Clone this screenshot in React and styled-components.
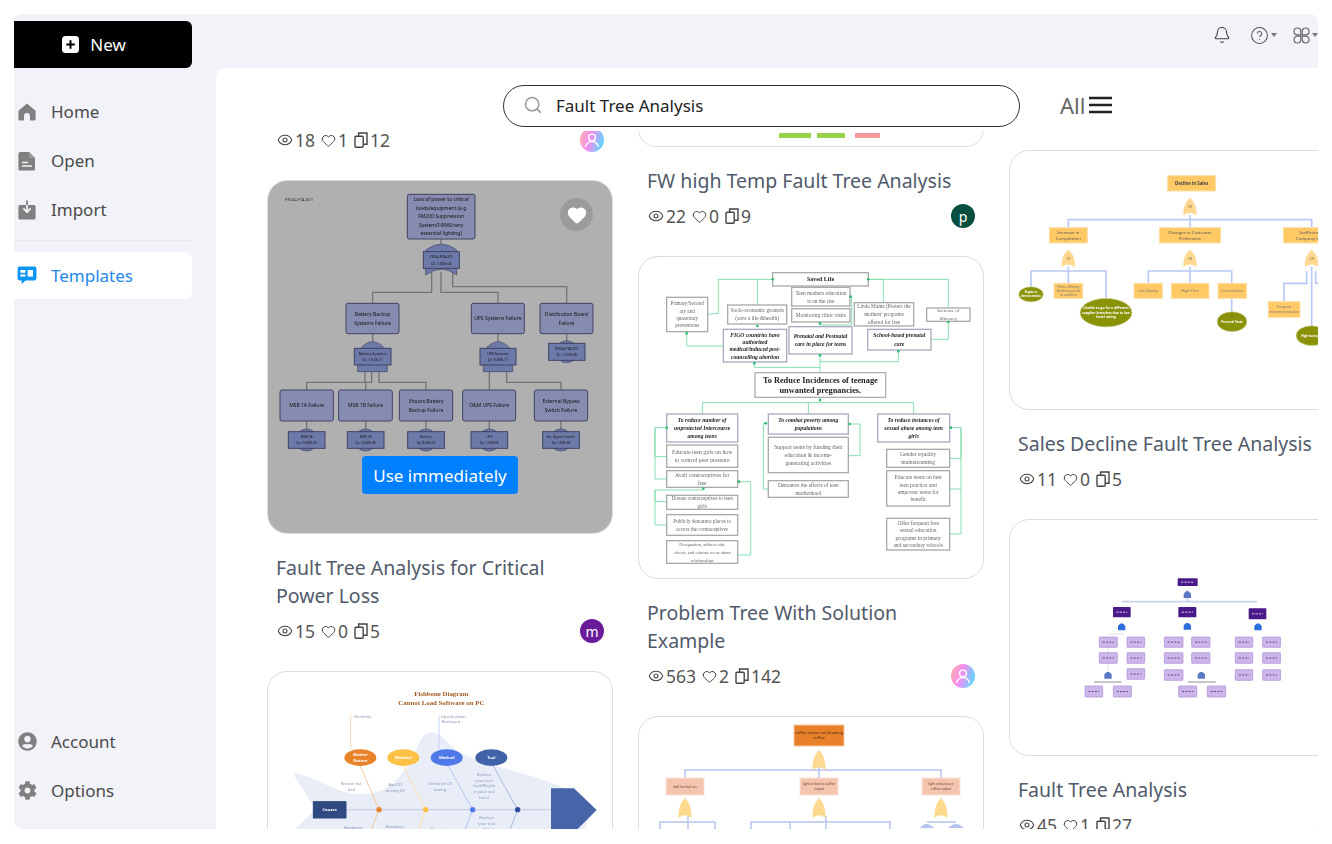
import { createGlobalStyle, styled } from "styled-components"
import { Bell, CircleHelp, Eye, Heart, Search } from "lucide-react"
import { FaCog, FaUserCircle } from "react-icons/fa"

const GlobalStyle = createGlobalStyle`
  html, body {
    margin: 0;
    background: #fff;
    font-family: "Noto Sans", "Open Sans", sans-serif;
  }
  * { box-sizing: border-box; }
`

// diagram helpers, coordinates are the ones of the thumbnail viewBox
const Rect = ({ b, fill = "#fff", stroke = "#999", sw = 3, r = 0, lines = [], size = 15, color = "#333", weight, italic, family, lh }) => {
  const [x1, y1, x2, y2] = b
  const step = lh || size * 1.6
  const cy = (y1 + y2) / 2 - ((lines.length - 1) * step) / 2
  return (
    <g>
      <rect x={x1} y={y1} width={x2 - x1} height={y2 - y1} fill={fill} stroke={stroke} strokeWidth={sw} rx={r} />
      {lines.map((t, i) => (
        <text
          key={i}
          x={(x1 + x2) / 2}
          y={cy + i * step + size * 0.35}
          textAnchor="middle"
          fontSize={size}
          fill={color}
          fontWeight={weight}
          fontStyle={italic ? "italic" : undefined}
          fontFamily={family}
        >
          {t}
        </text>
      ))}
    </g>
  )
}

const Lines = ({ pts, stroke, sw = 3 }) => (
  <g fill="none" stroke={stroke} strokeWidth={sw}>
    {pts.map((p) => <polyline key={p} points={p} />)}
  </g>
)

const OrGate = ({ x, y, w = 40, h = 52, fill = "#ffd88f", label = true }) => (
  <g>
    <path
      d={`M${x} ${y - h / 2} C${x + w * 0.42} ${y - h * 0.22} ${x + w / 2} ${y + h * 0.1} ${x + w / 2} ${y + h / 2} Q${x} ${y + h * 0.22} ${x - w / 2} ${y + h / 2} C${x - w / 2} ${y + h * 0.1} ${x - w * 0.42} ${y - h * 0.22} ${x} ${y - h / 2} Z`}
      fill={fill}
    />
    {label && <text x={x} y={y + 4} textAnchor="middle" fontSize="9" fill="#8a7a50">OR</text>}
  </g>
)

const boxBlue = "#c4caff"
const boxEdge = "#5c6090"

const PowerLossDiagram = () => {
  const mid = [
    [[258, 385, 417, 476], ["Battery Backup", "Systems Failure"]],
    [[634, 385, 793, 476], ["UPS Systems Failure"]],
    [[840, 385, 999, 476], ["Distribution Board", "Failure"]],
    [[60, 645, 220, 738], ["MSB 1A Failure"]],
    [[236, 645, 397, 738], ["MSB 1B Failure"]],
    [[418, 645, 578, 738], ["3hours Battery", "Backup Failure"]],
    [[608, 645, 767, 738], ["O&M UPS Failure"]],
    [[823, 645, 983, 738], ["External Bypass", "Switch Failure"]],
  ]
  const events = [
    [140, "MSB 1A", "Q= 3.000E-06"],
    [317, "MSB 1B", "Q= 3.000E-06"],
    [498, "Battery", "Q= 8.00E-06"],
    [688, "UPS", "Q= 1.00E-06"],
    [903, "Ext. Bypass Switch", "Q= 1.00E-06"],
  ]
  return (
    <DiagramSvg viewBox="21 15 1038 1059">
      <text x="75" y="77" fontSize="13" fill="#444">PKG4-FTA-001</text>
      <Lines
        stroke="#a8a8a8"
        sw={4}
        pts={[
          "543,192 543,230",
          "515,290 515,352 338,352 338,385",
          "543,290 543,352 714,352 714,385",
          "578,290 578,335 920,335 920,385",
          "338,476 338,500",
          "714,476 714,500",
          "920,476 920,500",
          "315,590 315,622 140,622 140,645",
          "335,590 335,622 317,622 317,645",
          "357,590 357,622 498,622 498,645",
          "688,590 688,645",
          "740,590 740,622 903,622 903,645",
          "140,738 140,770",
          "317,738 317,770",
          "498,738 498,770",
          "688,738 688,770",
          "903,738 903,770",
        ]}
      />
      <Rect b={[442, 58, 645, 192]} fill={boxBlue} stroke={boxEdge} r={6} size={15} lh={25.5} color="#222" lines={["Loss of power to critical", "loads/equipment (e.g", "FM200 Suppression", "System/I-BMS/very", "essential lighting)"]} />
      <path d="M497 300 V225 Q545 190 590 225 V300 Q545 265 497 300 Z" fill="#9fb0f5" stroke={boxEdge} strokeWidth="2" />
      <Rect b={[490, 230, 598, 280]} fill="#9fb0f5" stroke={boxEdge} size={11} lh={20} color="#222" lines={["PKG4-FTA-001", "Q= 1.05E-06"]} />

      {mid.map(([b, lines]) => (
        <Rect key={lines[0]} b={b} fill={boxBlue} stroke={boxEdge} r={6} size={15} lh={27} color="#222" lines={lines} />
      ))}

      <path d="M293 590 V530 Q338 470 382 530 V590 Z" fill="#9fb0f5" stroke={boxEdge} strokeWidth="2" />
      <Rect b={[283, 520, 393, 570]} fill="#9fb0f5" stroke={boxEdge} size={11} lh={20} color="#222" lines={["Battery Systems", "Q= 7.62E-11"]} />
      <path d="M670 590 V530 Q714 470 758 530 V590 Z" fill="#9fb0f5" stroke={boxEdge} strokeWidth="2" />
      <Rect b={[660, 520, 768, 570]} fill="#9fb0f5" stroke={boxEdge} size={11} lh={20} color="#222" lines={["UPS Systems", "Q= 3.90E-11"]} />
      <circle cx="920" cy="530" r="33" fill="#9fb0f5" stroke={boxEdge} strokeWidth="2" />
      <Rect b={[866, 505, 975, 556]} fill="#9fb0f5" stroke={boxEdge} size={11} lh={20} color="#222" lines={["PKG4-FTA-001", "Q= 1.05E-06"]} />

      {events.map(([x, name, q]) => (
        <g key={name}>
          <circle cx={x} cy="795" r="33" fill="#9fb0f5" stroke={boxEdge} strokeWidth="2" />
          <Rect b={[x - 55, 770, x + 55, 820]} fill="#9fb0f5" stroke={boxEdge} size={10} lh={18} color="#222" lines={[name, q]} />
        </g>
      ))}
    </DiagramSvg>
  )
}

const serif = "Liberation Serif, serif"

const ProblemTreeDiagram = () => {
  const plain = [
    [[95, 142, 218, 245], ["Primary/Second", "ary and", "quaternary", "preventions"], 15.5],
    [[278, 165, 455, 222], ["Socio-economic grounds", "(save a life &health)"], 16],
    [[470, 112, 645, 168], ["Teen mothers education", "is on the rise"], 16],
    [[470, 176, 645, 216], ["Monitoring clinic visits"], 16],
    [[658, 158, 836, 228], ["Linda Mama (Protect the", "mothers' programs", "offered for free"], 16],
    [[875, 174, 1005, 214], ["Increase of", "illiteracy"], 15],
    [[95, 585, 308, 652], ["Educate teen girls on how", "to control peer pressure"], 17.5],
    [[95, 662, 308, 712], ["Avail contraceptives for", "free"], 17],
    [[95, 736, 308, 778], ["Donate contraceptives to teen", "girls"], 15.5],
    [[95, 794, 308, 856], ["Publicly denounce places to", "access the contraceptives"], 15.5],
    [[95, 872, 308, 940], ["Designation, address side", "effects, and educate teens about", "relationships"], 13.5],
    [[400, 562, 640, 668], ["Support teens by funding their", "education & income-", "generating activities"], 17],
    [[400, 692, 640, 742], ["Denounce the effects of teen", "motherhood"], 16],
    [[755, 598, 944, 652], ["Gender equality", "mainstreaming"], 17],
    [[755, 662, 944, 768], ["Educate teens on best", "teen practice and", "empower teens for", "benefit"], 16.5],
    [[755, 805, 944, 900], ["Offer frequent free", "sexual education", "programs in primary", "and secondary schools"], 16.5],
  ]
  const goals = [
    [[265, 238, 455, 336], ["FIGO countries have", "authorized", "medical/induced post-", "counselling abortion"]],
    [[462, 230, 651, 312], ["Prenatal and Postnatal", "care in place for teens"]],
    [[698, 238, 888, 300], ["School-based prenatal", "care"]],
    [[95, 492, 308, 576], ["To reduce number of", "unprotected Intercourse", "among teens"]],
    [[400, 492, 640, 552], ["To combat poverty among", "populations"]],
    [[728, 492, 944, 576], ["To reduce instances of", "sexual abuse among teen", "girls"]],
  ]
  const arrows = [
    [413, 88], [700, 88], [155, 250], [367, 228], [555, 220], [555, 316], [940, 216], [790, 304], [358, 340],
    [555, 450], [95, 533], [205, 716], [312, 695], [392, 520], [644, 522], [948, 533], [647, 140],
  ]
  return (
    <DiagramSvg viewBox="9 18 1038 969">
      <Lines
        stroke="#86dfb0"
        sw={3}
        pts={[
          "218,193 250,190 250,88 413,88",
          "367,165 367,88",
          "745,158 745,88 700,88",
          "940,174 940,88 700,88",
          "265,288 155,288 155,245",
          "888,268 940,268 940,214",
          "555,368 555,312",
          "555,352 358,352 358,336",
          "555,335 790,335 790,300",
          "645,140 650,140 650,225 555,225 555,216",
          "555,442 555,458 202,458 202,492",
          "520,458 520,492",
          "555,458 836,458 836,492",
          "95,620 60,620 60,533 95,533",
          "95,687 60,687 60,533",
          "308,915 347,915 347,695 308,695",
          "95,755 60,755 60,720 205,720 205,712",
          "95,825 60,825 60,720",
          "400,717 385,717 385,520 400,520",
          "640,617 675,617 675,522 640,522",
          "944,625 978,625 978,533 944,533",
          "944,717 978,717",
          "944,852 978,852 978,533",
        ]}
      />
      <Rect b={[413, 68, 700, 108]} stroke="#aaa" sw={4} size={18} weight="700" color="#222" family={serif} lines={["Saved Life"]} />
      <Rect b={[360, 368, 752, 442]} stroke="#b0b0b0" sw={4} size={25} lh={30} weight="700" color="#222" family={serif} lines={["To Reduce Incidences of teenage", "unwanted pregnancies."]} />
      {plain.map(([b, lines, size]) => (
        <Rect key={lines[0]} b={b} stroke="#aaa" sw={4} size={size} lh={lines.length > 3 ? 22 : 24} color="#666" family={serif} lines={lines} />
      ))}
      {goals.map(([b, lines]) => (
        <Rect key={lines[0]} b={b} stroke="#a8acbc" sw={4} size={17} lh={lines.length > 3 ? 22 : 25} color="#222" weight="700" italic family={serif} lines={lines} />
      ))}
      {arrows.map(([x, y]) => <circle key={`${x}-${y}`} cx={x} cy={y} r="4" fill="#2ebd6e" />)}
    </DiagramSvg>
  )
}

const SalesTreeDiagram = () => {
  const boxes = [
    [[162, 415, 248, 460], ["Firms offering", "identical goods", "at random"], 10, 13],
    [[402, 415, 487, 460], ["Low Quality"], 11, 14],
    [[514, 415, 627, 460], ["High Price"], 11, 14],
    [[654, 415, 740, 460], ["Convenience"], 11, 14],
    [[805, 470, 900, 517], ["Frequent", "miscommunication"], 10, 15],
  ]
  const olive = [
    [93, 448, 37, 23, ["Region or", "demonstration"], 8],
    [318, 503, 78, 43, ["Unable to go for a different", "supplier branches due to low", "hotel rating"], 10],
    [696, 530, 45, 30, ["Personal Taste"], 9],
    [935, 572, 47, 30, ["High turnover"], 9],
  ]
  return (
    <DiagramSvg viewBox="27 15 1038 780">
      <Lines
        stroke="#b9c9f5"
        sw={5}
        pts={[
          "205,248 205,224 935,224 935,248",
          "570,210 570,248",
          "93,425 93,378 318,378 318,460",
          "205,365 205,415",
          "445,415 445,378 695,378 695,500",
          "570,365 570,415",
          "852,470 852,415 920,415 920,378",
          "935,365 935,545",
          "947,378 947,415 970,415",
        ]}
      />
      <Rect b={[503, 92, 647, 138]} fill="#ffc966" stroke="#ffe0a8" size={13} weight="700" color="#444" lines={["Decline in Sales"]} />
      <Rect b={[148, 248, 262, 294]} fill="#ffc966" stroke="#ffe0a8" size={13} lh={18} color="#555" lines={["Increase in", "Competition"]} />
      <Rect b={[478, 248, 662, 294]} fill="#ffc966" stroke="#ffe0a8" size={13} lh={18} color="#555" lines={["Changes in Customer", "Preference"]} />
      <Rect b={[850, 248, 1040, 294]} fill="#ffc966" stroke="#ffe0a8" size={13} lh={18} color="#555" lines={["Inefficiencies in", "Company's Quality"]} />
      {[[570, 185], [205, 340], [570, 340], [935, 340]].map(([x, y]) => (
        <OrGate key={`${x}-${y}`} x={x} y={y} />
      ))}
      {boxes.map(([b, lines, size, lh]) => (
        <Rect key={lines[0]} b={b} fill="#ffc966" stroke="#ffe0a8" size={size} lh={lh} color="#777" lines={lines} />
      ))}
      {olive.map(([cx, cy, rx, ry, lines, size]) => (
        <g key={lines[0]}>
          <ellipse cx={cx} cy={cy} rx={rx} ry={ry} fill="#8a9208" stroke="#dfe2b8" strokeWidth="2" />
          {lines.map((t, i) => (
            <text key={t} x={cx} y={cy + 3 + (i - (lines.length - 1) / 2) * (size + 4)} textAnchor="middle" fontSize={size} fontWeight="700" fill="#fff">{t}</text>
          ))}
        </g>
      ))}
    </DiagramSvg>
  )
}

const PurpleTreeDiagram = () => {
  const dark = [[533, 205, 593, 228], [339, 291, 392, 322], [535, 291, 589, 322], [746, 295, 799, 328]]
  const light = [
    [298, 381, 352, 412], [381, 381, 434, 412], [298, 428, 352, 460], [381, 428, 434, 460], [381, 476, 434, 508],
    [493, 381, 549, 412], [575, 381, 630, 412], [493, 428, 549, 460], [575, 428, 630, 460], [493, 479, 549, 511],
    [706, 381, 758, 412], [788, 381, 842, 412], [706, 428, 758, 460], [788, 428, 842, 460], [706, 479, 758, 511], [788, 479, 842, 511],
    [255, 528, 308, 561], [340, 528, 394, 561], [536, 528, 590, 561], [622, 528, 677, 561],
  ]
  return (
    <DiagramSvg viewBox="27 27 1038 708">
      <Lines stroke="#c9d2ec" sw={5} pts={["365,275 772,275", "562,240 562,275"]} />
      <Lines stroke="#e2e2e2" sw={3} pts={["324,381 324,480", "324,372 372,372"]} />
      <Lines stroke="#aaa" sw={4} pts={["282,516 365,516", "563,516 647,516"]} />
      {dark.map(([x1, y1, x2, y2]) => (
        <g key={`${x1}-${y1}`}>
          <rect x={x1} y={y1} width={x2 - x1} height={y2 - y1} fill="#4b1a8a" rx="2" />
          <line x1={x1 + 10} x2={x2 - 10} y1={(y1 + y2) / 2} y2={(y1 + y2) / 2} stroke="#d8c8f0" strokeWidth="3" strokeDasharray="7 3" />
        </g>
      ))}
      {light.map(([x1, y1, x2, y2]) => (
        <g key={`${x1}-${y1}`}>
          <rect x={x1} y={y1} width={x2 - x1} height={y2 - y1} fill="#cdb6ea" stroke="#a98ad6" strokeWidth="2" rx="2" />
          <line x1={x1 + 10} x2={x2 - 10} y1={(y1 + y2) / 2} y2={(y1 + y2) / 2} stroke="#5a4a78" strokeWidth="3" strokeDasharray="6 4" />
        </g>
      ))}
      {[[562, 253, "#5b78c4"], [324, 495, "#5b78c4"], [604, 495, "#5b78c4"], [365, 350, "#2f6fdc"], [562, 348, "#2f6fdc"], [774, 350, "#2f6fdc"]].map(([x, y, c]) => (
        <path key={`${x}-${y}`} d={`M${x - 11} ${y + 11} V${y - 2} Q${x} ${y - 18} ${x + 11} ${y - 2} V${y + 11} Z`} fill={c} />
      ))}
    </DiagramSvg>
  )
}

const FishboneDiagram = () => {
  const small = [
    [308, 171, "Humidity"], [580, 171, "Upside-down"], [573, 187, "Backward"],
    [274, 372, "Broken hot"], [274, 390, "bed"], [406, 374, "Bad CD"], [406, 392, "driving CD"],
    [540, 372, "Defeated CD"], [540, 390, "tuning"],
    [672, 344, "Replace"], [672, 363, "your tool"], [672, 379, "load/Maybe"], [672, 396, "in your tool"], [672, 414, "here!"],
    [280, 505, "Hardware"], [404, 501, "Hardware"], [535, 511, "Running"],
    [680, 474, "Replace"], [680, 492, "your tool"], [680, 510, "load/Maybe"],
  ]
  const ovals = [
    [301, "#e8832a", ["Mother", "Nature"]],
    [430, "#ffc247", ["Material"]],
    [560, "#4f78e8", ["Method"]],
    [694, "#3f62a8", ["Tool"]],
  ]
  const dots = [[357, "#e8832a"], [497, "#ffc247"], [638, "#4f78e8"], [773, "#2f4a9a"]]
  return (
    <DiagramSvg viewBox="21 30 1038 900">
      <path d="M98 335 C170 345 230 400 300 400 C400 400 440 330 480 240 C500 205 530 205 560 240 C610 300 700 310 780 335 C840 350 880 370 930 385 L1000 445 L930 600 L300 620 L100 510 L165 445 Z" fill="#e9edf7" />
      <text x="544" y="104" textAnchor="middle" fontSize="20.5" fontWeight="700" fontFamily={serif} fill="#a05a20">Fishbone Diagram</text>
      <text x="544" y="131" textAnchor="middle" fontSize="20.5" fontWeight="700" fontFamily={serif} fill="#a05a20">Cannot Load Software on PC</text>
      <Lines stroke="#c4cbe0" sw={3} pts={["258,446 873,446"]} />
      <g fill="none" strokeWidth="3">
        <polyline points="272,165 272,265" stroke="#f8d8bc" />
        <polyline points="537,165 537,265" stroke="#c4d2f6" />
        <polyline points="301,315 357,446 325,530" stroke="#f6c7a0" />
        <polyline points="430,315 497,446 465,530" stroke="#ffe2a8" />
        <polyline points="565,315 638,446 606,530" stroke="#b2c5f4" />
        <polyline points="700,315 773,446 741,530" stroke="#a8b8dc" />
      </g>
      {small.map(([x, y, t]) => (
        <text key={`${t}-${y}`} x={x} y={y} textAnchor="middle" fontSize="12" fill="#8a97b5">{t}</text>
      ))}
      <path d="M873 382 H942 L1010 447 L942 515 L900 560 H873 Z" fill="#4565a8" />
      <Rect b={[160, 422, 258, 471]} fill="#2f4a80" stroke="#2f4a80" size={12.5} weight="700" color="#fff" lines={["Causes"]} />
      {ovals.map(([x, c, lines]) => (
        <g key={x}>
          <ellipse cx={x} cy="290" rx="48" ry="25" fill={c} />
          {lines.map((t, i) => (
            <text key={t} x={x} y={294 + (i - (lines.length - 1) / 2) * 16} textAnchor="middle" fontSize="12" fontWeight="700" fill="#fff">{t}</text>
          ))}
        </g>
      ))}
      {dots.map(([x, c]) => <circle key={x} cx={x} cy="446" r="8" fill={c} />)}
    </DiagramSvg>
  )
}

const CoffeeTreeDiagram = () => (
  <DiagramSvg viewBox="0 0 346 300">
    <Lines
      stroke="#b5c4ef"
      sw={1.5}
      pts={[
        "47,62 47,54 303,54 303,62",
        "181,50 181,62",
        "22,125 22,106 77,106 77,125",
        "50,100 50,125",
        "113,125 113,106 252,106 252,125",
        "152,106 152,125",
        "188,100 188,125",
      ]}
    />
    <Rect b={[156, 9, 206, 30]} fill="#e8802a" stroke="#f5c9a2" sw={1} size={4} lh={5} color="#4a2a10" lines={["coffee maker not brewing", "coffee"]} />
    <Rect b={[28, 62, 66, 79]} fill="#f4c4ae" stroke="#fbe3d8" sw={1} size={3.2} lh={5} color="#6a4030" lines={["well hot but cos"]} />
    <Rect b={[162, 62, 200, 79]} fill="#f4c4ae" stroke="#fbe3d8" sw={1} size={3.2} lh={5} color="#6a4030" lines={["light on but no coffee", "output"]} />
    <Rect b={[284, 62, 322, 79]} fill="#f4c4ae" stroke="#fbe3d8" sw={1} size={3.2} lh={5} color="#6a4030" lines={["light on but poor", "coffee output"]} />
    <OrGate x={181} y={44} w={13} h={20} label={false} />
    <OrGate x={47} y={92} w={13} h={20} label={false} />
    <OrGate x={181} y={92} w={13} h={20} label={false} />
    <OrGate x={303} y={92} w={13} h={20} label={false} />
    <path d="M282 112 Q288 104 296 112 Z M310 112 Q318 104 326 112 Z" fill="#b5c4ef" />
    <Lines stroke="#b5c4ef" sw={1.5} pts={["289,106 318,106"]} />
  </DiagramSvg>
)

const CroppedDiagram = () => (
  <DiagramSvg viewBox="0 0 346 36">
    <rect x="141" y="22" width="32" height="5" fill="#9ad14b" />
    <rect x="179" y="22" width="28" height="5" fill="#9ad14b" />
    <rect x="217" y="22" width="25" height="5" fill="#f59a9a" />
  </DiagramSvg>
)

const HomeIcon = () => (
  <svg width="18" height="18" viewBox="0 0 18 18" fill="#808080">
    <path d="M9 .6 17.2 7.4a1 1 0 0 1 .4.8V16a1.4 1.4 0 0 1-1.4 1.4H12V13a3 3 0 0 0-6 0v4.4H1.8A1.4 1.4 0 0 1 .4 16V8.2a1 1 0 0 1 .4-.8Z" />
  </svg>
)

const OpenIcon = () => (
  <svg width="18" height="20" viewBox="0 0 18 20">
    <path d="M2 1h9l6 6v11a1.6 1.6 0 0 1-1.6 1.6H2A1.6 1.6 0 0 1 .4 18V2.6A1.6 1.6 0 0 1 2 1Z" fill="#808080" />
    <path d="M4 11.5h6M4 15h10" stroke="#f1f3f9" strokeWidth="1.6" />
    <path d="M11 1v6h6" fill="#9c9c9c" />
  </svg>
)

const ImportIcon = () => (
  <svg width="18" height="20" viewBox="0 0 18 20">
    <path d="M2 5h14a1.6 1.6 0 0 1 1.6 1.6V18a1.6 1.6 0 0 1-1.6 1.6H2A1.6 1.6 0 0 1 .4 18V6.6A1.6 1.6 0 0 1 2 5Z" fill="#808080" />
    <path d="M9 .5v11M5.4 8.4 9 12.2l3.6-3.8" fill="none" stroke="#f1f3f9" strokeWidth="1.8" />
    <path d="M9 .5V5" stroke="#808080" strokeWidth="1.8" />
  </svg>
)

const TemplatesIcon = () => (
  <svg width="20" height="19" viewBox="0 0 20 19">
    <path d="M2.4.6h15.2A1.8 1.8 0 0 1 19.4 2.4v10.2a1.8 1.8 0 0 1-1.8 1.8H8.6L4.6 18v-3.6H2.4A1.8 1.8 0 0 1 .6 12.6V2.4A1.8 1.8 0 0 1 2.4.6Z" fill="#0a95f5" />
    <rect x="3.4" y="4" width="5" height="2.8" fill="#fff" />
    <rect x="3.4" y="8.4" width="5" height="2.2" fill="#fff" />
    <rect x="10.6" y="4" width="5.4" height="6.6" fill="#fff" />
  </svg>
)

const NewIcon = () => (
  <svg width="17" height="17" viewBox="0 0 17 17">
    <rect width="17" height="17" rx="3.5" fill="#fff" />
    <path d="M8.5 4.2v8.6M4.2 8.5h8.6" stroke="#000" strokeWidth="2" />
  </svg>
)

const AppsIcon = () => (
  <svg width="17" height="17" viewBox="0 0 17 17" fill="none" stroke="#666" strokeWidth="1.2">
    <path d="M4.4 1A3.4 3.4 0 0 1 7.8 4.4V7.8H4.4A3.4 3.4 0 0 1 4.4 1Z" />
    <path d="M12.6 1A3.4 3.4 0 0 1 12.6 7.8H9.2V4.4A3.4 3.4 0 0 1 12.6 1Z" />
    <path d="M4.4 16A3.4 3.4 0 0 1 4.4 9.2H7.8V12.6A3.4 3.4 0 0 1 4.4 16Z" />
    <path d="M12.6 16A3.4 3.4 0 0 1 9.2 12.6V9.2H12.6A3.4 3.4 0 0 1 12.6 16Z" />
  </svg>
)

const CopiesIcon = () => (
  <svg width="14" height="16" viewBox="0 0 14 16" fill="none" stroke="#444" strokeWidth="1.4">
    <rect x="1" y="4.2" width="8.2" height="11" rx="1" />
    <path d="M4.6 4.2V1H13V12.2H9.2" />
  </svg>
)

const GradientAvatar = () => (
  <svg width="24" height="24" viewBox="0 0 24 24">
    <defs>
      <linearGradient id="avatarFill" x1="0" y1="0" x2="1" y2="0.3">
        <stop offset="0" stopColor="#ffb3a0" />
        <stop offset="0.5" stopColor="#f78cf0" />
        <stop offset="1" stopColor="#6fd0ff" />
      </linearGradient>
    </defs>
    <circle cx="12" cy="12" r="12" fill="url(#avatarFill)" />
    <circle cx="12" cy="9.5" r="3.4" fill="none" stroke="#fff" strokeWidth="1.4" />
    <path d="M5.5 19c1-4 3.5-5.4 6.5-5.4s5.5 1.4 6.5 5.4" fill="none" stroke="#fff" strokeWidth="1.4" />
  </svg>
)

const Stats = ({ views, likes, copies, avatar }) => (
  <StatRow>
    <StatGroup>
      <Stat><Eye size={16} strokeWidth={1.6} color="#444" />{views}</Stat>
      <Stat><Heart size={15} strokeWidth={1.6} color="#444" />{likes}</Stat>
      <Stat><CopiesIcon />{copies}</Stat>
    </StatGroup>
    {avatar}
  </StatRow>
)

const Card = ({ height, title, stats, hovered, children }) => (
  <CardWrap>
    <Thumb $height={height}>
      {children}
      {hovered && (
        <HoverLayer>
          <LikeButton><Heart size={20} fill="#fff" stroke="#fff" /></LikeButton>
          <UseButton>Use immediately</UseButton>
        </HoverLayer>
      )}
    </Thumb>
    {title && <Title>{title}</Title>}
    {stats && <Stats {...stats} />}
  </CardWrap>
)

const App = () => (
  <>
    <GlobalStyle />
    <Page>
      <Window>
        <Sidebar>
          <NewButton><NewIcon />New</NewButton>
          <NavList>
            <NavItem><NavIcon><HomeIcon /></NavIcon>Home</NavItem>
            <NavItem><NavIcon><OpenIcon /></NavIcon>Open</NavItem>
            <NavItem><NavIcon><ImportIcon /></NavIcon>Import</NavItem>
            <Divider />
            <NavItem $active><NavIcon><TemplatesIcon /></NavIcon>Templates</NavItem>
          </NavList>
          <BottomNav>
            <NavItem><NavIcon><FaUserCircle size={19} color="#808080" /></NavIcon>Account</NavItem>
            <NavItem><NavIcon><FaCog size={19} color="#808080" /></NavIcon>Options</NavItem>
          </BottomNav>
        </Sidebar>
        <Content>
          <TopBar>
            <BellSlot><Bell size={18} strokeWidth={1.5} color="#444" /></BellSlot>
            <TopAction><CircleHelp size={19} strokeWidth={1.3} color="#555" /><Caret /></TopAction>
            <TopAction><AppsIcon /><Caret /></TopAction>
          </TopBar>
          <Main>
            <SearchRow>
              <SearchBox>
                <Search size={20} strokeWidth={1.8} color="#999" />
                <SearchText>Fault Tree Analysis</SearchText>
              </SearchBox>
              <FilterButton>
                All
                <svg width="23" height="18" viewBox="0 0 23 18" stroke="#222" strokeWidth="2.5">
                  <path d="M0 2h23M0 9h23M0 16h23" />
                </svg>
              </FilterButton>
            </SearchRow>
            <Gallery>
              <Column $offset={-12}>
                <Stats views={18} likes={1} copies={12} avatar={<GradientAvatar />} />
                <Card
                  height={354}
                  hovered
                  title="Fault Tree Analysis for Critical Power Loss"
                  stats={{ views: 15, likes: 0, copies: 5, avatar: <Avatar $bg="#6a1b9a">m</Avatar> }}
                >
                  <PowerLossDiagram />
                </Card>
                <Card height={300}><FishboneDiagram /></Card>
              </Column>
              <Column $offset={-20}>
                <Card
                  height={36}
                  title="FW high Temp Fault Tree Analysis"
                  stats={{ views: 22, likes: 0, copies: 9, avatar: <Avatar $bg="#0a4f3e">p</Avatar> }}
                >
                  <CroppedDiagram />
                </Card>
                <Card
                  height={323}
                  title="Problem Tree With Solution Example"
                  stats={{ views: 563, likes: 2, copies: 142, avatar: <GradientAvatar /> }}
                >
                  <ProblemTreeDiagram />
                </Card>
                <Card height={300}><CoffeeTreeDiagram /></Card>
              </Column>
              <Column $offset={19}>
                <Card
                  height={260}
                  title="Sales Decline Fault Tree Analysis"
                  stats={{ views: 11, likes: 0, copies: 5 }}
                >
                  <SalesTreeDiagram />
                </Card>
                <Card
                  height={237}
                  title="Fault Tree Analysis"
                  stats={{ views: 45, likes: 1, copies: 27 }}
                >
                  <PurpleTreeDiagram />
                </Card>
              </Column>
            </Gallery>
          </Main>
        </Content>
      </Window>
    </Page>
  </>
)

const Page = styled.div`
  width: 1332px;
  height: 844px;
  padding: 14px;
  overflow: hidden;
`

const Window = styled.div`
  display: flex;
  width: 1304px;
  height: 815px;
  background: #f1f3f9;
  border-radius: 8px;
  overflow: hidden;
`

const Sidebar = styled.aside`
  display: flex;
  flex-direction: column;
  width: 178px;
  flex-shrink: 0;
  padding-top: 7px;
`

const NewButton = styled.div`
  display: flex;
  align-items: center;
  justify-content: center;
  gap: 11px;
  height: 47px;
  background: #000;
  color: #fff;
  font-size: 17px;
  border-radius: 0 6px 6px 0;
  padding-right: 18px;
`

const NavList = styled.nav`
  display: flex;
  flex-direction: column;
  margin-top: 19px;
`

const BottomNav = styled.nav`
  display: flex;
  flex-direction: column;
  margin-top: auto;
  padding-bottom: 14px;
`

const NavItem = styled.div`
  display: flex;
  align-items: center;
  height: ${({ $active }) => ($active ? "47px" : "49px")};
  color: ${({ $active }) => ($active ? "#1e88f0" : "#4a4a4a")};
  background: ${({ $active }) => ($active ? "#fff" : "transparent")};
  border-radius: 0 6px 6px 0;
  font-size: 17px;
`

const NavIcon = styled.span`
  display: flex;
  align-items: center;
  justify-content: center;
  width: 26px;
  margin-right: 11px;
`

const Divider = styled.div`
  height: 1px;
  background: #e8e9ee;
  margin: 6px 0 11px;
`

const Content = styled.div`
  display: flex;
  flex-direction: column;
  flex: 1;
  min-width: 0;
`

const TopBar = styled.header`
  display: flex;
  align-items: center;
  justify-content: flex-end;
  gap: 16px;
  height: 54px;
  padding-bottom: 12px;
  flex-shrink: 0;
`

const BellSlot = styled.span`
  display: flex;
  margin-right: 3px;
`

const TopAction = styled.div`
  display: flex;
  align-items: center;
  gap: 2px;
`

const Caret = styled.span`
  width: 0;
  height: 0;
  border-left: 3.5px solid transparent;
  border-right: 3.5px solid transparent;
  border-top: 4px solid #777;
`

const Main = styled.main`
  display: flex;
  flex-direction: column;
  flex: 1;
  min-height: 0;
  margin-left: 24px;
  background: #fff;
  border-radius: 10px 0 0 0;
  overflow: hidden;
`

const SearchRow = styled.div`
  display: flex;
  align-items: flex-start;
  height: 63px;
  padding: 17px 0 0 287px;
  flex-shrink: 0;
  background: #fff;
  position: relative;
  z-index: 1;
`

const SearchBox = styled.div`
  display: flex;
  align-items: center;
  gap: 13px;
  width: 517px;
  height: 42px;
  padding: 0 0 2px 19px;
  border: 1px solid #333;
  border-radius: 21px;
  background: #fff;
`

const SearchText = styled.span`
  font-size: 17px;
  color: #222;
`

const FilterButton = styled.div`
  display: flex;
  align-items: center;
  gap: 4px;
  height: 42px;
  margin-left: 40px;
  padding-bottom: 2px;
  font-size: 22px;
  color: #666;
`

const Gallery = styled.div`
  display: grid;
  grid-template-columns: repeat(3, 346px);
  gap: 25px;
  flex: 1;
  min-height: 0;
  padding-left: 51px;
  overflow: hidden;
`

const Column = styled.div`
  display: flex;
  flex-direction: column;
  gap: 28px;
  margin-top: ${({ $offset }) => $offset}px;
`

const CardWrap = styled.article`
  display: flex;
  flex-direction: column;
`

const Thumb = styled.div`
  position: relative;
  height: ${({ $height }) => $height}px;
  flex-shrink: 0;
  background: #fff;
  border: 1px solid #dcdcdc;
  border-radius: 20px;
  overflow: hidden;
`

const DiagramSvg = styled.svg`
  display: block;
  width: 346px;
  margin: -1px;
  filter: blur(0.45px);
  font-family: "Noto Sans", sans-serif;
`

const HoverLayer = styled.div`
  position: absolute;
  inset: 0;
  background: rgba(0, 0, 0, 0.31);
`

const LikeButton = styled.div`
  position: absolute;
  top: 17px;
  right: 19px;
  display: flex;
  align-items: center;
  justify-content: center;
  width: 33px;
  height: 33px;
  border-radius: 50%;
  background: rgba(150, 150, 150, 0.8);
`

const UseButton = styled.div`
  position: absolute;
  left: 94px;
  top: 275px;
  display: flex;
  align-items: center;
  justify-content: center;
  width: 156px;
  height: 38px;
  border-radius: 4px;
  background: #0080ff;
  color: #fff;
  font-size: 17px;
`

const Title = styled.h3`
  margin: 20px 0 0;
  padding: 0 9px;
  font-size: 19.5px;
  font-weight: 400;
  line-height: 28px;
  color: #505a6a;
`

const StatRow = styled.div`
  display: flex;
  align-items: center;
  justify-content: space-between;
  height: 24px;
  margin-top: 9px;
  padding: 0 9px 0 10px;
  flex-shrink: 0;
`

const StatGroup = styled.div`
  display: flex;
  align-items: center;
  gap: 6px;
`

const Stat = styled.span`
  display: flex;
  align-items: center;
  gap: 2px;
  font-size: 17.5px;
  color: #555;
`

const Avatar = styled.span`
  display: flex;
  align-items: center;
  justify-content: center;
  width: 24px;
  height: 24px;
  border-radius: 50%;
  background: ${({ $bg }) => $bg};
  color: #fff;
  font-size: 14px;
`

export default App
